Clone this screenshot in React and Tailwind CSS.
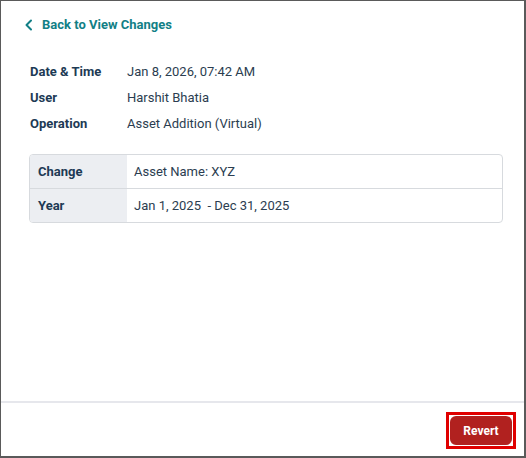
import React from "react";

export default function App() {
  return (
    <div className="w-[526px] h-[458px] bg-white border border-[#5a5a5a] border-r-2 border-b-2 flex flex-col font-['Roboto',sans-serif]">
      <div className="flex-1 flex flex-col px-[28px]">
        <div className="flex items-center gap-[8px] mt-[15px] text-[#127f86] ml-[-5px]">
          <svg width="10" height="12" viewBox="0 0 10 12" fill="none">
            <path d="M7 1.5L2.5 6L7 10.5" stroke="#127f86" strokeWidth="2" strokeLinecap="round" strokeLinejoin="round" />
          </svg>
          <span className="text-[13px] font-bold leading-[18px]">Back to View Changes</span>
        </div>
        <div className="mt-[28px] grid grid-cols-[97px_1fr] gap-y-[7px] text-[13px] leading-[19px] pl-[1px]">
          <div className="font-bold text-[#1d3a55]">Date &amp; Time</div>
          <div className="text-[#2b3d50]">Jan 8, 2026, 07:42 AM</div>
          <div className="font-bold text-[#1d3a55]">User</div>
          <div className="text-[#2b3d50]">Harshit Bhatia</div>
          <div className="font-bold text-[#1d3a55]">Operation</div>
          <div className="text-[#2b3d50]">Asset Addition (Virtual)</div>
        </div>
        <div className="mt-[21px] w-[474px] border border-[#d7dade] rounded-[4px] overflow-hidden text-[13px]">
          <div className="flex h-[34px] border-b border-[#d7dade]">
            <div className="w-[97px] bg-[#eceef2] flex items-center pl-[8px] font-bold text-[#1d3a55]">Change</div>
            <div className="flex-1 flex items-center pl-[7px] text-[#2b3d50]">Asset Name: XYZ</div>
          </div>
          <div className="flex h-[33px]">
            <div className="w-[97px] bg-[#eceef2] flex items-center pl-[8px] font-bold text-[#1d3a55]">Year</div>
            <div className="flex-1 flex items-center pl-[7px] text-[#2b3d50] whitespace-pre">Jan 1, 2025  - Dec 31, 2025</div>
          </div>
        </div>
      </div>
      <div className="h-[55px] border-t-2 border-[#e6e7ec] flex justify-end items-start pt-[9px] pr-[8px]">
        <div className="border-[3px] border-[#e00000] p-[1px]">
          <button className="w-[62px] h-[29px] rounded-[6px] bg-[#b1211f] text-white text-[12px] font-bold">Revert</button>
        </div>
      </div>
    </div>
  );
}
